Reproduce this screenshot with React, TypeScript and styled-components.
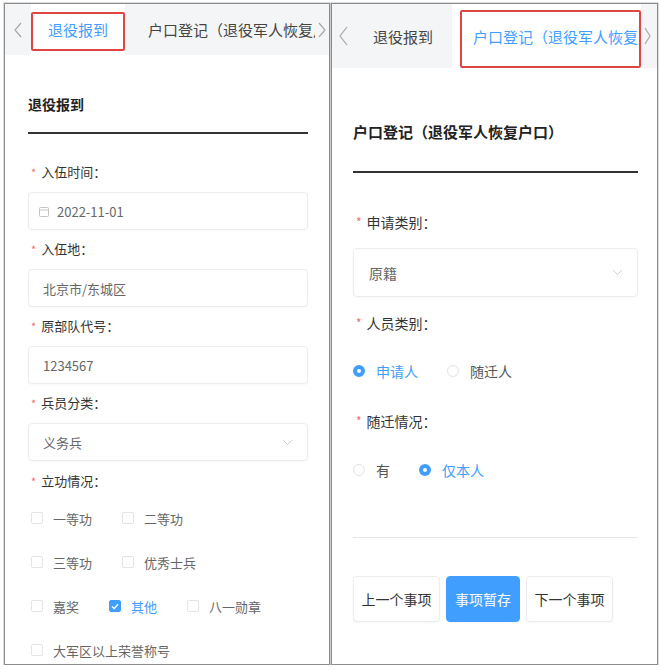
import React from 'react';
import styled, { createGlobalStyle } from 'styled-components';

const BLUE = '#409eff';
const FONT = '"Noto Sans CJK SC", "Noto Sans", sans-serif';

const GlobalStyle = createGlobalStyle`
  html, body {
    margin: 0;
    padding: 0;
    background: #ffffff;
    font-family: ${FONT};
  }
`;

const Page = styled.div`
  display: flex;
  gap: 1px;
  padding: 3px 0 0 4px;
`;

const Panel = styled.div<{ $w: number }>`
  width: ${(p) => p.$w}px;
  height: 662px;
  box-sizing: border-box;
  border: 1px solid #8c8c8c;
  box-shadow: 0 0 0 0.5px #b8b8b8;
  overflow: hidden;
  display: flex;
  flex-direction: column;
  background: #fff;
`;

const TabBar = styled.div<{ $h: number }>`
  height: ${(p) => p.$h}px;
  flex-shrink: 0;
  display: flex;
  align-items: stretch;
  background: #f4f5f7;
`;

const Arrow = styled.div<{ $w: number }>`
  width: ${(p) => p.$w}px;
  flex-shrink: 0;
  display: flex;
  align-items: center;
  justify-content: center;
  color: #a8a8a8;
`;

const Tab = styled.div<{ $active?: boolean; $fs: number; $pad: number }>`
  display: flex;
  align-items: center;
  padding: 0 ${(p) => p.$pad}px;
  font-size: ${(p) => p.$fs}px;
  white-space: nowrap;
  color: ${(p) => (p.$active ? BLUE : '#444')};
  background: ${(p) => (p.$active ? '#fff' : 'transparent')};
`;

const TabFill = styled(Tab)`
  flex: 1;
  min-width: 0;
  overflow: hidden;
`;

/* red annotation frame drawn round the active tab */
const Marked = styled.div<{ $top: number; $bottom: number; $w: number; $inset?: number }>`
  position: relative;
  width: ${(p) => p.$w}px;
  flex-shrink: 0;
  display: flex;
  align-items: center;
  overflow: hidden;
  background: #fff;
  &::after {
    content: '';
    position: absolute;
    left: ${(p) => p.$inset ?? 0}px;
    right: 0;
    top: ${(p) => p.$top}px;
    bottom: ${(p) => p.$bottom}px;
    border: 2px solid #e0463f;
    border-radius: 2px;
  }
`;

const Body = styled.div<{ $pl: number; $pr: number }>`
  padding: 0 ${(p) => p.$pr}px 0 ${(p) => p.$pl}px;
  display: flex;
  flex-direction: column;
`;

const Title = styled.div<{ $fs: number; $lh: number; $mt: number }>`
  margin-top: ${(p) => p.$mt}px;
  font-size: ${(p) => p.$fs}px;
  line-height: ${(p) => p.$lh}px;
  font-weight: 700;
  color: #222;
  white-space: nowrap;
`;

const Rule = styled.div<{ $mt: number }>`
  margin-top: ${(p) => p.$mt}px;
  height: 2px;
  background: #333;
`;

const Label = styled.div<{ $fs: number; $lh: number; $mt: number }>`
  margin-top: ${(p) => p.$mt}px;
  font-size: ${(p) => p.$fs}px;
  line-height: ${(p) => p.$lh}px;
  color: #333;
  display: flex;
  align-items: center;
  &::before {
    content: '*';
    color: #f56c6c;
    font-size: ${(p) => p.$fs - 2}px;
    margin: 0 5px 0 3px;
  }
`;

const Field = styled.div<{ $h: number; $mt: number; $fs: number; $pl: number }>`
  margin-top: ${(p) => p.$mt}px;
  height: ${(p) => p.$h}px;
  box-sizing: border-box;
  border: 1px solid #ececec;
  border-radius: 4px;
  box-shadow: 0 1px 2px rgba(0, 0, 0, 0.03);
  display: flex;
  align-items: center;
  gap: 8px;
  padding: 0 14px 0 ${(p) => p.$pl}px;
  font-size: ${(p) => p.$fs}px;
  color: #666;
`;

const FieldText = styled.span`
  flex: 1;
`;

const CheckRow = styled.div<{ $mt?: number }>`
  margin-top: ${(p) => p.$mt ?? 0}px;
  height: 44px;
  display: flex;
  align-items: center;
  gap: 30px;
  padding-left: 3px;
`;

const CheckItem = styled.label<{ $on?: boolean }>`
  display: flex;
  align-items: center;
  gap: 10px;
  font-size: 13px;
  color: ${(p) => (p.$on ? BLUE : '#666')};
`;

const Box = styled.span<{ $on?: boolean }>`
  width: 12px;
  height: 12px;
  box-sizing: border-box;
  border-radius: 2px;
  border: 1px solid ${(p) => (p.$on ? BLUE : '#e3e3e3')};
  background: ${(p) => (p.$on ? BLUE : '#fff')};
  display: flex;
  align-items: center;
  justify-content: center;
`;

const RadioRow = styled.div<{ $mt: number }>`
  margin-top: ${(p) => p.$mt}px;
  height: 40px;
  display: flex;
  align-items: center;
  gap: 29px;
`;

const RadioItem = styled.label<{ $on?: boolean }>`
  display: flex;
  align-items: center;
  gap: 11px;
  font-size: 14px;
  color: ${(p) => (p.$on ? BLUE : '#555')};
`;

const Dot = styled.span<{ $on?: boolean }>`
  width: 12px;
  height: 12px;
  box-sizing: border-box;
  border-radius: 50%;
  border: ${(p) => (p.$on ? `4px solid ${BLUE}` : '1px solid #e2e2e2')};
  background: #fff;
`;

const Divider = styled.div<{ $mt: number }>`
  margin-top: ${(p) => p.$mt}px;
  height: 1px;
  background: #e6e6e6;
`;

const Buttons = styled.div<{ $mt: number }>`
  margin-top: ${(p) => p.$mt}px;
  display: flex;
  gap: 6px;
`;

const Button = styled.button<{ $primary?: boolean; $w: number }>`
  width: ${(p) => p.$w}px;
  height: 46px;
  border-radius: 4px;
  font-family: ${FONT};
  font-size: 14px;
  padding: 0;
  border: 1px solid ${(p) => (p.$primary ? BLUE : '#ececec')};
  background: ${(p) => (p.$primary ? BLUE : '#fff')};
  color: ${(p) => (p.$primary ? '#fff' : '#333')};
  box-shadow: 0 1px 2px rgba(0, 0, 0, 0.04);
`;

const Chevron = ({ dir, w, h }: { dir: 'left' | 'right'; w: number; h: number }) => (
  <svg width={w} height={h} viewBox={`0 0 ${w} ${h}`} fill="none">
    <polyline
      points={dir === 'left' ? `${w - 1},1 1,${h / 2} ${w - 1},${h - 1}` : `1,1 ${w - 1},${h / 2} 1,${h - 1}`}
      stroke="currentColor"
      strokeWidth="1.2"
    />
  </svg>
);

const Down = () => (
  <svg width="11" height="7" viewBox="0 0 11 7" fill="none">
    <polyline points="1,1 5.5,5.5 10,1" stroke="#cfcfcf" strokeWidth="1" />
  </svg>
);

const Calendar = () => (
  <svg width="10" height="11" viewBox="0 0 10 11" fill="none">
    <rect x="0.5" y="1.5" width="9" height="9" rx="1" stroke="#c4c4c4" />
    <line x1="0.5" y1="4" x2="9.5" y2="4" stroke="#c4c4c4" />
  </svg>
);

const Tick = () => (
  <svg width="8" height="7" viewBox="0 0 8 7" fill="none">
    <polyline points="1,3.5 3.2,5.6 7,1.2" stroke="#fff" strokeWidth="1.4" />
  </svg>
);

const checks = [
  [{ t: '一等功' }, { t: '二等功' }],
  [{ t: '三等功' }, { t: '优秀士兵' }],
  [{ t: '嘉奖' }, { t: '其他', on: true }, { t: '八一勋章' }],
  [{ t: '大军区以上荣誉称号' }],
];

const LeftForm = () => {
  const inputs = [
    { label: '入伍时间：', value: '2022-11-01', icon: true },
    { label: '入伍地：', value: '北京市/东城区' },
    { label: '原部队代号：', value: '1234567' },
    { label: '兵员分类：', value: '义务兵', select: true },
  ];
  return (
    <Panel $w={326}>
      <TabBar $h={51}>
        <Arrow $w={26}>
          <Chevron dir="left" w={8} h={16} />
        </Arrow>
        <Marked $w={94} $top={8} $bottom={4}>
          <Tab $active $fs={15} $pad={17}>退役报到</Tab>
        </Marked>
        <TabFill $fs={15} $pad={23}>户口登记（退役军人恢复户口）</TabFill>
        <Arrow $w={14}>
          <Chevron dir="right" w={8} h={16} />
        </Arrow>
      </TabBar>
      <Body $pl={23} $pr={21}>
        <Title $fs={14} $lh={20} $mt={39}>退役报到</Title>
        <Rule $mt={18} />
        {inputs.map((f, i) => (
          <React.Fragment key={f.label}>
            <Label $fs={13} $lh={20} $mt={i === 0 ? 28 : 9}>{f.label}</Label>
            <Field $h={38} $mt={10} $fs={13} $pl={f.icon ? 10 : 14}>
              {f.icon && <Calendar />}
              <FieldText>{f.value}</FieldText>
              {f.select && <Down />}
            </Field>
          </React.Fragment>
        ))}
        <Label $fs={13} $lh={20} $mt={10}>立功情况：</Label>
        {checks.map((row, i) => (
          <CheckRow key={i} $mt={i === 0 ? 5 : 0}>
            {row.map((c) => (
              <CheckItem key={c.t} $on={c.on}>
                <Box $on={c.on}>{c.on && <Tick />}</Box>
                {c.t}
              </CheckItem>
            ))}
          </CheckRow>
        ))}
      </Body>
    </Panel>
  );
};

const RightForm = () => (
  <Panel $w={327}>
    <TabBar $h={64}>
      <Arrow $w={22}>
        <Chevron dir="left" w={9} h={20} />
      </Arrow>
      <Tab $fs={15} $pad={19}>退役报到</Tab>
      <Marked $w={189} $inset={8} $top={6} $bottom={0}>
        <Tab $active $fs={15} $pad={21}>户口登记（退役军人恢复户口）</Tab>
      </Marked>
      <Arrow $w={12}>
        <Chevron dir="right" w={7} h={18} />
      </Arrow>
    </TabBar>
    <Body $pl={21} $pr={19}>
      <Title $fs={15} $lh={22} $mt={53}>户口登记（退役军人恢复户口）</Title>
      <Rule $mt={28} />
      <Label $fs={14} $lh={22} $mt={38}>申请类别：</Label>
      <Field $h={49} $mt={15} $fs={14} $pl={15}>
        <FieldText>原籍</FieldText>
        <Down />
      </Field>
      <Label $fs={14} $lh={22} $mt={15}>人员类别：</Label>
      <RadioRow $mt={17}>
        <RadioItem $on>
          <Dot $on />
          申请人
        </RadioItem>
        <RadioItem>
          <Dot />
          随迁人
        </RadioItem>
      </RadioRow>
      <Label $fs={14} $lh={22} $mt={19}>随迁情况：</Label>
      <RadioRow $mt={18}>
        <RadioItem>
          <Dot />
          有
        </RadioItem>
        <RadioItem $on>
          <Dot $on />
          仅本人
        </RadioItem>
      </RadioRow>
      <Divider $mt={47} />
      <Buttons $mt={38}>
        <Button $w={87}>上一个事项</Button>
        <Button $w={74} $primary>事项暂存</Button>
        <Button $w={87}>下一个事项</Button>
      </Buttons>
    </Body>
  </Panel>
);

export default function App() {
  return (
    <>
      <GlobalStyle />
      <Page>
        <LeftForm />
        <RightForm />
      </Page>
    </>
  );
}
